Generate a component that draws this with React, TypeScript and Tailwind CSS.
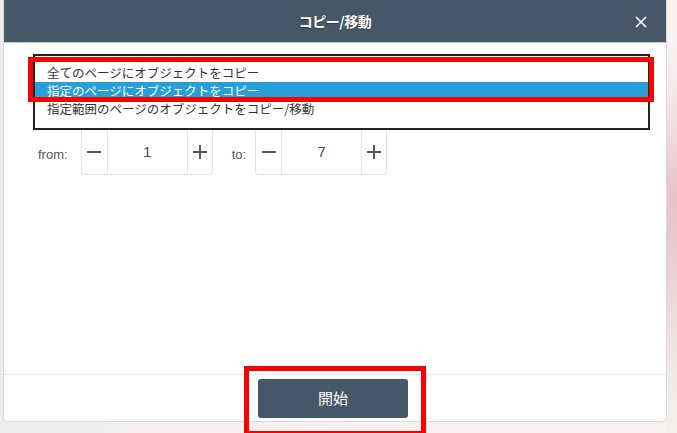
import React from "react";

const jp = { fontFamily: '"Noto Sans CJK JP", "Noto Sans", sans-serif' };
const latin = { fontFamily: '"Liberation Sans", Arial, sans-serif' };

const options = [
  "全てのページにオブジェクトをコピー",
  "指定のページにオブジェクトをコピー",
  "指定範囲のページのオブジェクトをコピー/移動",
];

function Spinner({ value }: { value: string }) {
  return (
    <div className="flex h-[45px] w-[132px] border border-t-0 border-[#e3e3e3] rounded-b-[4px]">
      <div className="flex w-[26px] items-center justify-center border-r border-[#e6e6e6]">
        <span className="block h-[2px] w-[14px] bg-[#555]" />
      </div>
      <div
        className="flex flex-1 items-center justify-center text-[15px] text-[#3d4f5e]"
        style={latin}
      >
        {value}
      </div>
      <div className="relative flex w-[25px] items-center justify-center border-l border-[#e6e6e6]">
        <span className="block h-[2px] w-[14px] bg-[#555]" />
        <span className="absolute block h-[14px] w-[2px] bg-[#555]" />
      </div>
    </div>
  );
}

export default function App() {
  return (
    <div
      className="relative flex h-[433px] w-[677px] overflow-hidden pl-[3px] pr-[10px] pb-[11px] bg-[linear-gradient(90deg,#ececec_0%,#ededed_15%,#f7f1ef_20%,#f8f2f1_100%)]"
      style={jp}
    >
      <div className="absolute right-0 top-[40px] h-[393px] w-[10px] bg-[linear-gradient(180deg,#f8f5f4_0%,#f1e0e2_20%,#e5c3c9_40%,#ead1d5_60%,#eee6e2_80%,#f3f1ec_100%)]" />
      <div className="relative flex flex-1 flex-col overflow-hidden rounded-b-[5px] border border-t-0 border-[#d9d9d9] bg-white">
        <div className="relative flex h-[42px] shrink-0 items-center justify-center bg-[#465867] text-white">
          <span className="text-[14px] font-bold tracking-[-0.5px] [text-shadow:0_1px_1px_rgba(0,0,0,0.35)]">
            コピー/移動
          </span>
          <svg
            className="absolute right-[19px] top-[16px]"
            width="12"
            height="12"
            viewBox="0 0 12 12"
            stroke="white"
            strokeWidth="1.6"
          >
            <line x1="1" y1="1" x2="11" y2="11" />
            <line x1="11" y1="1" x2="1" y2="11" />
          </svg>
        </div>
        <div className="h-px bg-[#c9ced2]" />

        <div className="flex flex-1 flex-col pl-[29px] pr-[16px] pt-[11px]">
          <div className="border-2 border-[#222] bg-white pt-[8px] pb-[10px] text-[12.5px] leading-[18px]">
            {options.map((o, i) => (
              <div
                key={i}
                className={
                  i === 1
                    ? "bg-[#279fd9] pl-[12px] text-white"
                    : "pl-[12px] text-[#333]"
                }
              >
                {o}
              </div>
            ))}
          </div>
          <div className="flex items-start text-[13px] text-[#555]" style={latin}>
            <span className="ml-[5px] mr-[13px] mt-[15px]">from:</span>
            <Spinner value="1" />
            <span className="ml-[19px] mr-[9px] mt-[15px]">to:</span>
            <Spinner value="7" />
          </div>
        </div>

        <div className="h-px bg-[#ececec]" />
        <div className="flex h-[46px] shrink-0 items-center justify-center pr-[4px]">
          <button className="h-[39px] w-[150px] rounded-[3px] bg-[#465867] text-[15px] text-white">
            開始
          </button>
        </div>
      </div>

      <div className="pointer-events-none absolute left-[28px] top-[57px] h-[45px] w-[626px] border-[5px] border-[#ff0000]" />
      <div className="pointer-events-none absolute left-[244px] top-[366px] h-[70px] w-[182px] border-[5px] border-[#ff0000]" />
    </div>
  );
}
